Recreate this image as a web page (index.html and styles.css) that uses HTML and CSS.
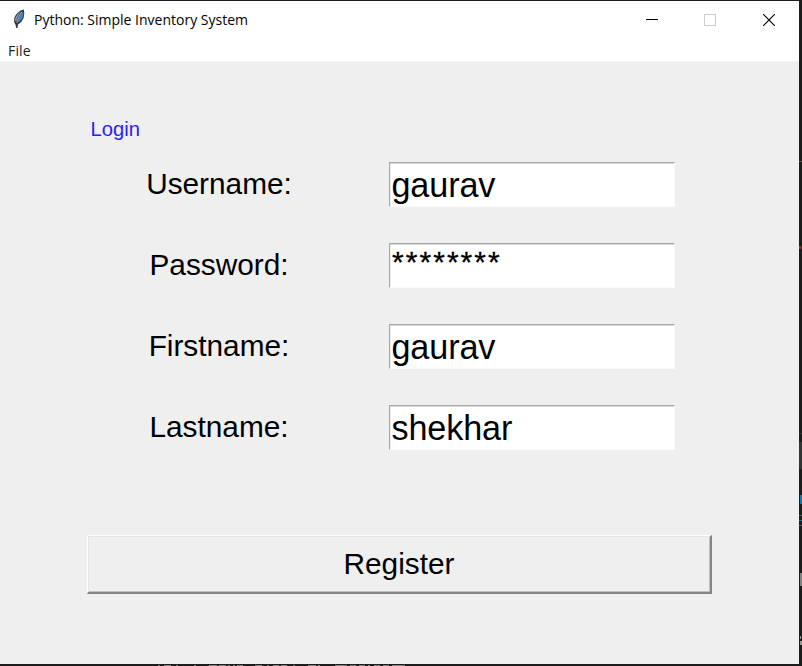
FILE: index.html
```html
<!DOCTYPE html>
<html lang="en">
<head>
<meta charset="utf-8">
<title>Python: Simple Inventory System</title>
<link rel="stylesheet" href="styles.css">
</head>
<body>
<div class="desktop">
  <main class="window">
    <header class="titlebar">
      <svg class="feather" width="12" height="20" viewBox="0 0 12 20">
        <path d="M10.8 .5 Q12 4 10.6 9 Q8.8 13.5 5 15.5 L4.5 19 L3.2 19 L2.6 16 Q.4 13 1.2 9 Q4 2 10.8 .5Z" fill="#30363f"/>
        <path d="M10 2 Q11 5 9.4 9 Q7.6 12.5 4.5 13.5 Q6 7 10 2Z" fill="#4783c8"/>
        <path d="M8 2.5 Q2.3 6 1.9 11 L3 13 Q4.5 6.5 8 2.5Z" fill="#8595a8"/>
        <path d="M8.7 3 Q5 8 3.8 14" fill="none" stroke="#b5d2ed" stroke-width=".8"/>
      </svg>
      <h1 class="title">Python: Simple Inventory System</h1>
      <div class="controls">
        <svg width="12" height="12" viewBox="0 0 12 12"><path d="M0 5.5H12" stroke="#000"/></svg>
        <svg width="12" height="12" viewBox="0 0 12 12"><rect x=".5" y=".5" width="11" height="11" fill="none" stroke="#ccc"/></svg>
        <svg width="12" height="12" viewBox="0 0 12 12"><path d="M.3 .3L11.7 11.7M11.7 .3L.3 11.7" stroke="#000" stroke-width="1.15"/></svg>
      </div>
    </header>
    <nav class="menubar"><span class="menu">File</span></nav>
    <form class="content">
      <div class="login">Login</div>
      <div class="fields">
        <label class="label">Username:</label><div class="entry">gaurav</div>
        <label class="label">Password:</label><div class="entry stars">********</div>
        <label class="label">Firstname:</label><div class="entry">gaurav</div>
        <label class="label">Lastname:</label><div class="entry">shekhar</div>
      </div>
      <div class="register">Register</div>
    </form>
  </main>
  <svg class="backdrop" width="802" height="666" viewBox="0 0 802 666">
    <path d="M799 161.5h3" stroke="#764c49"/>
    <path d="M799 246h2v3h-2z" fill="#8c3a27"/>
    <path d="M799 433h3v1h-3zM799 442h3v27h-3z" fill="#303432"/>
    <path d="M800 495h2v9h-2z" fill="#1676a0"/>
    <path d="M799 515.5h3M799 520.5h3M799 525.5h3" stroke="#147180"/>
    <path d="M800 573h2v13h-2z" fill="#7f827e"/>
    <path d="M800 636h1v3h-1zM800 641h2v4h-2z" fill="#92988f"/>
    <path d="M158 665.5h2M164 665.5h7M176 665.5h2M194 665.5h2M209 665.5h8M219 665.5h7M228 665.5h2M233 665.5h2M237 665.5h6M255 665.5h7M267 665.5h2M273 665.5h6M281 665.5h6M293 665.5h2M308 665.5h8M318 665.5h2M335 665.5h12M350 665.5h6M359 665.5h6M368 665.5h2M374 665.5h6M383 665.5h6M392 665.5h13" stroke="#858585"/>
  </svg>
</div>
</body>
</html>
```
FILE: styles.css
```css
* { box-sizing: border-box; }
body { margin: 0; background: #1b1c1c; }
.desktop {
  position: relative;
  width: 802px;
  height: 666px;
  overflow: hidden;
  padding: 1px 3px 2px 0;
  background: #1b1c1c;
}
.backdrop { position: absolute; left: 0; top: 0; pointer-events: none; }
.window {
  display: flex;
  flex-direction: column;
  width: 799px;
  height: 663px;
  background: #efefef;
  color: #000;
}
.titlebar {
  display: flex;
  align-items: center;
  height: 38px;
  padding: 0 24px 0 13px;
  background: #fff;
}
.feather { margin-right: 9px; margin-top: -2px; }
.title {
  margin: 0;
  font: 400 14px/20px "Open Sans", sans-serif;
  white-space: nowrap;
}
.controls { display: flex; gap: 46px; margin-left: auto; }
.controls svg { display: block; }
.controls svg:last-child { margin-left: 1px; }
.menubar {
  height: 23px;
  padding-left: 8px;
  background: #fff;
  border-bottom: 1px solid #f7f7f7;
  font: 14px/24px "Open Sans", sans-serif;
  letter-spacing: .15px;
  color: #1c1c24;
}
.menu { display: block; }
.content {
  flex: 1;
  padding: 55px 87px 0 87px;
  font-family: "Liberation Sans", Arial, sans-serif;
}
.login {
  height: 45px;
  padding-left: 3.5px;
  font-size: 20.2px;
  line-height: 24px;
  color: #2c20ff;
}
.fields {
  display: grid;
  grid-template-columns: 264px 286px;
  grid-auto-rows: 45px;
  column-gap: 38px;
  row-gap: 36px;
}
.label {
  font-size: 29.8px;
  line-height: 44px;
  text-align: center;
}
.entry {
  border: 1px solid #a8a8a8;
  border-right-color: #fafafa;
  border-bottom-color: #fafafa;
  box-shadow: inset 0 1px #d8d8d8, inset 1px 0 #eee;
  background: #fff;
  padding-left: 1.4px;
  font-size: 34.2px;
  letter-spacing: -.1px;
  line-height: 45px;
}
.stars {
  font-size: 30px;
  letter-spacing: 2.05px;
  line-height: 35px;
  padding-left: 2px;
  -webkit-text-stroke: .3px #000;
}
.register {
  width: 625px;
  height: 59px;
  margin-top: 85px;
  border: 1px solid #fcfcfc;
  border-right: 2px solid #858585;
  border-bottom: 2px solid #858585;
  box-shadow: inset 1px 1px #e4e4e4, inset -1px -1px #c0c0c0;
  font-size: 29.8px;
  line-height: 56px;
  text-align: center;
}
```
